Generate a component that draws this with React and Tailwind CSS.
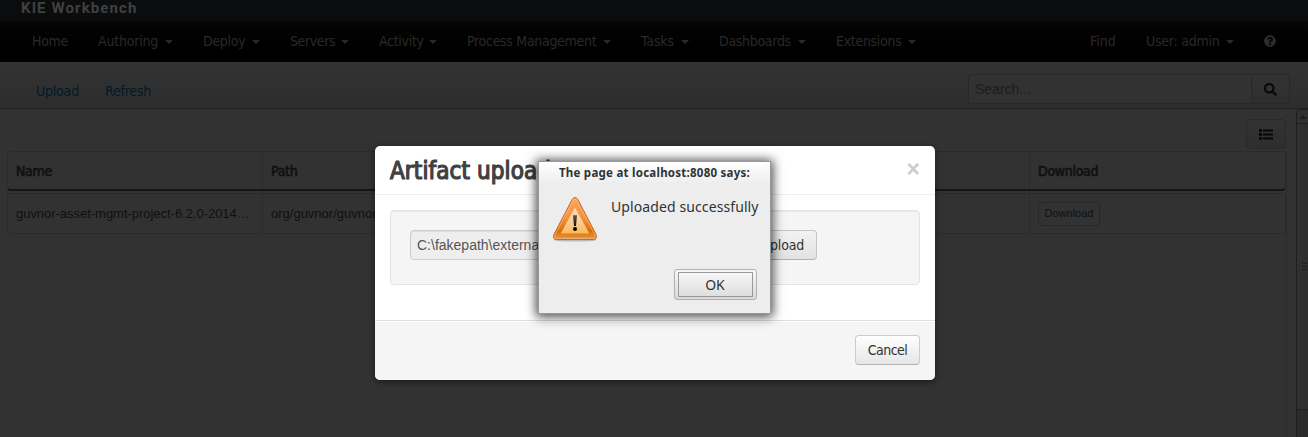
import React from "react";
import { FaSearch, FaQuestionCircle } from "react-icons/fa";

const leftMenu = [
  { label: "Home", width: 36, spacing: -0.3 },
  { label: "Authoring", width: 60, caret: true, spacing: -0.2 },
  { label: "Deploy", width: 42, caret: true, spacing: -0.3 },
  { label: "Servers", width: 44, caret: true, spacing: -0.4 },
  { label: "Activity", width: 43, caret: true, spacing: -0.3 },
  { label: "Process Management", width: 129, caret: true, spacing: -0.3 },
  { label: "Tasks", width: 33, caret: true, spacing: -0.1 },
  { label: "Dashboards", width: 72, caret: true, spacing: -0.3 },
  { label: "Extensions", width: 65, caret: true, spacing: -0.3 },
];

const rightMenu = [
  { label: "Find", width: 26, spacing: 0 },
  { label: "User: admin", width: 73, caret: true, spacing: -0.25 },
];

function MenuItem({ label, width, caret, spacing }) {
  return (
    <div className="flex shrink-0 items-center">
      <span className="whitespace-nowrap" style={{ width, letterSpacing: spacing }}>
        {label}
      </span>
      {caret && (
        <span className="mt-px ml-[7px] h-0 w-0 border-x-4 border-t-4 border-x-transparent border-t-[#292929]" />
      )}
    </div>
  );
}

function ListIcon() {
  return (
    <svg width="14" height="11" viewBox="0 0 14 11" fill="#070707">
      <rect x="0" y="0" width="3" height="3" rx="0.8" />
      <rect x="0" y="4" width="3" height="3" rx="0.8" />
      <rect x="0" y="8" width="3" height="3" rx="0.8" />
      <rect x="4" y="0.5" width="10" height="2" />
      <rect x="4" y="4.5" width="10" height="2" />
      <rect x="4" y="8.5" width="10" height="2" />
    </svg>
  );
}

function WarningIcon() {
  return (
    <svg width="46" height="46" viewBox="0 0 46 46" className="shrink-0">
      <defs>
        <linearGradient id="rim" x1="0" y1="0" x2="0" y2="1">
          <stop offset="0" stopColor="#f9a75c" />
          <stop offset="0.5" stopColor="#f29140" />
          <stop offset="0.8" stopColor="#dd6c05" />
          <stop offset="1" stopColor="#e39a50" />
        </linearGradient>
        <linearGradient id="core" x1="0" y1="0" x2="0" y2="1">
          <stop offset="0" stopColor="#fcdcb4" />
          <stop offset="0.6" stopColor="#fdcb90" />
          <stop offset="1" stopColor="#fbb955" />
        </linearGradient>
        <linearGradient id="mark" x1="0" y1="0" x2="0" y2="1">
          <stop offset="0" stopColor="#555" />
          <stop offset="1" stopColor="#111" />
        </linearGradient>
      </defs>
      <ellipse cx="23" cy="43" rx="21.5" ry="1.6" fill="#000" opacity="0.22" />
      <path
        d="M20.2 2.3Q23-1.3 25.8 2.3L44.1 37.6Q45.4 42.4 41.6 42.5H4.4Q.6 42.4 1.9 37.6Z"
        fill="url(#rim)"
        stroke="#d0691a"
        strokeWidth="1"
      />
      <path
        d="M21.2 3.3Q23 1.1 24.8 3.3L42.9 37.9Q43.9 41.3 41.4 41.4H4.6Q2.1 41.3 3.1 37.9Z"
        fill="none"
        stroke="#fbc48c"
        strokeWidth="1"
        opacity="0.6"
      />
      <path d="M23 10.5L37.3 36.5H8.7Z" fill="url(#core)" />
      <path d="M21 18.2H25L24 29H22Z" fill="url(#mark)" />
      <circle cx="23" cy="32" r="2" fill="#000" />
    </svg>
  );
}

function Workbench() {
  return (
    <div className="flex h-full flex-col">
      <header className="h-[21px] shrink-0 bg-[#0b0c0e] pl-[21px]">
        <div className="font-['Roboto',sans-serif] text-[15px] leading-[17px] font-bold tracking-[1.1px] text-[#404040]">
          KIE Workbench
        </div>
      </header>

      <nav className="flex h-[41px] shrink-0 items-center justify-between bg-linear-to-b from-[#070707] to-black pr-8 pb-px pl-8 text-sm text-[#292929]">
        <div className="flex gap-[30px]">
          {leftMenu.map((item) => (
            <MenuItem key={item.label} {...item} />
          ))}
        </div>
        <div className="flex items-center gap-[30px]">
          {rightMenu.map((item) => (
            <MenuItem key={item.label} {...item} />
          ))}
          <FaQuestionCircle size={12} color="#2c2c2c" />
        </div>
      </nav>

      <div className="flex h-[47px] shrink-0 justify-between border-b border-[#222222] bg-linear-to-b from-[#333333] to-[#2d2d2d] pr-[18px] pl-9">
        <div className="flex pt-[19px] text-sm leading-5 tracking-[-0.2px] text-[#001b29]">
          <span className="w-[69px]">Upload</span>
          <span>Refresh</span>
        </div>
        <div className="mt-3 flex h-[30px] w-[322px] font-['Liberation_Sans',sans-serif] text-sm">
          <div className="flex flex-1 items-center rounded-l-sm border border-[#282828] bg-[#323232] pl-1.5 text-[#1c1c1c]">
            Search...
          </div>
          <div className="flex w-[38px] items-center justify-center rounded-r-sm border border-l-0 border-[#282828] bg-linear-to-b from-[#333333] to-[#2e2e2e]">
            <FaSearch size={13} color="#070707" />
          </div>
        </div>
      </div>

      <div className="flex min-h-0 flex-1 bg-[#323232]">
        <main className="flex min-w-0 flex-1 flex-col pr-[9px] pl-[7px]">
          <div className="flex h-[42px] shrink-0 justify-end pt-2.5">
            <div className="mr-px flex h-[30px] w-10 items-center justify-center rounded-sm border border-[#292929] bg-linear-to-b from-[#333333] to-[#2e2e2e]">
              <ListIcon />
            </div>
          </div>
          <div className="min-h-0 flex-1 border-r border-[#2b2b2b]">
            <div className="flex h-10 rounded-sm border border-b-2 border-[#2b2b2b] border-b-[#151515] text-sm tracking-[-0.3px] text-[#101010] [-webkit-text-stroke:0.6px_#101010]">
              <div className="flex w-[255px] items-center border-r border-[#2b2b2b] pl-2">Name</div>
              <div className="flex w-[767px] items-center border-r border-[#2b2b2b] pl-2">Path</div>
              <div className="flex items-center pl-2">Download</div>
            </div>
            <div className="mt-0.5 flex h-[41px] rounded-b-sm border border-[#2b2b2b] font-['Liberation_Sans',sans-serif] text-[13px] text-[#101010]">
              <div className="flex w-[255px] items-center border-r border-[#2b2b2b] pl-2 tracking-[-0.03px]">
                guvnor-asset-mgmt-project-6.2.0-2014…
              </div>
              <div className="flex w-[767px] items-center border-r border-[#2b2b2b] pl-2">
                org/guvnor/guvnor-asset-mgmt-project
              </div>
              <div className="flex items-center pl-2">
                <div className="flex h-6 w-[62px] items-center justify-center rounded-[3px] border border-[#282828] text-[11px]">
                  Download
                </div>
              </div>
            </div>
          </div>
        </main>

        <aside className="flex w-3 shrink-0 flex-col rounded-tl-sm border-l border-[#1e1e1e] bg-[#2b2b2b]">
          <div className="flex h-[15px] items-center justify-center border-y border-[#202020] bg-[#303030]">
            <span className="h-0 w-0 border-x-4 border-b-4 border-x-transparent border-b-[#202020]" />
          </div>
          <div className="flex h-[286px] flex-col items-center justify-center gap-0.5 border-b border-[#1e1e1e] bg-linear-to-r from-[#313131] to-[#2c2c2c] pl-1">
            <span className="h-px w-[5px] bg-[#1e1e1e]" />
            <span className="h-px w-[5px] bg-[#1e1e1e]" />
            <span className="h-px w-[5px] bg-[#1e1e1e]" />
          </div>
        </aside>
      </div>
    </div>
  );
}

function UploadModal() {
  return (
    <section className="absolute top-[146px] left-[375px] flex h-[234px] w-[560px] flex-col overflow-hidden rounded-[5px] bg-white text-[#333333] shadow-[0_2px_6px_rgba(0,0,0,0.5)]">
      <div className="flex h-[49px] shrink-0 justify-between border-b border-[#eeeeee] px-[15px]">
        <h3 className="pt-[10px] text-[24px] leading-[30px] tracking-[0.1px] whitespace-nowrap text-[#404040] [-webkit-text-stroke:1.2px_#404040]">
          Artifact upload
        </h3>
        <span className="pt-[13px] font-['Liberation_Sans',sans-serif] text-[23px] leading-5 font-bold text-[#cccccc]">
          ×
        </span>
      </div>
      <div className="h-[125px] shrink-0 p-[15px]">
        <div className="flex h-[75px] justify-between rounded-sm border border-[#e3e3e3] bg-[#f5f5f5] pt-[19px] pr-[102px] pl-[19px] shadow-[inset_0_1px_1px_rgba(0,0,0,0.05)]">
          <div className="flex h-[30px] w-[206px] items-center rounded-sm border border-[#cccccc] bg-[#eeeeee] pl-1.5 font-['Liberation_Sans',sans-serif] text-sm text-[#555555] shadow-[inset_0_1px_1px_rgba(0,0,0,0.075)]">
            C:\fakepath\external
          </div>
          <div className="flex h-[30px] w-[74px] items-center justify-end rounded-sm border border-[#c5c5c5] border-b-[#b0b0b0] bg-linear-to-b from-[#f2f2f2] to-[#e2e2e2] pr-3 text-sm tracking-[-0.2px]">
            Upload
          </div>
        </div>
      </div>
      <div className="flex flex-1 justify-end border-t border-[#dddddd] bg-[#f5f5f5] pt-3.5 pr-[15px] shadow-[inset_0_1px_0_#fff]">
        <div className="flex h-[30px] w-[65px] items-center justify-center rounded-sm border border-[#cccccc] border-b-[#b3b3b3] bg-linear-to-b from-white to-[#e6e6e6] text-sm tracking-[-0.5px]">
          Cancel
        </div>
      </div>
    </section>
  );
}

function AlertDialog() {
  return (
    <section className="absolute top-[161px] left-[538px] flex h-[153px] w-[233px] flex-col border border-[#999999] bg-[#ededed] font-['Noto_Sans',sans-serif] text-[#2e3436] shadow-[0_1px_10px_2px_rgba(0,0,0,0.7)]">
      <h4 className="h-[22px] shrink-0 bg-linear-to-b from-white to-[#ededed] text-center text-[11.5px] leading-[22px] font-bold tracking-[0.25px] whitespace-nowrap">
        The page at localhost:8080 says:
      </h4>
      <div className="flex pt-[13px] pl-[13px]">
        <WarningIcon />
        <p className="pl-[13px] text-[14px] leading-[20px] tracking-[0.1px] whitespace-nowrap">
          Uploaded successfully
        </p>
      </div>
      <div className="mt-[26px] ml-[135px] h-[31px] w-[83px] rounded-[3px] border border-[#b0b0b0] bg-linear-to-b from-[#f8f8f8] to-[#d9d9d9] px-[3px] py-0.5">
        <div className="flex h-[25px] items-center justify-center border border-[#999999] bg-linear-to-b from-[#f7f7f7] to-[#dedede] pr-px text-[14px]">
          OK
        </div>
      </div>
    </section>
  );
}

export default function App() {
  return (
    <div className="relative h-[437px] w-[1308px] overflow-hidden bg-[#323232] font-['DejaVu_Sans_Condensed','DejaVu_Sans',sans-serif]">
      <Workbench />
      <UploadModal />
      <AlertDialog />
    </div>
  );
}
